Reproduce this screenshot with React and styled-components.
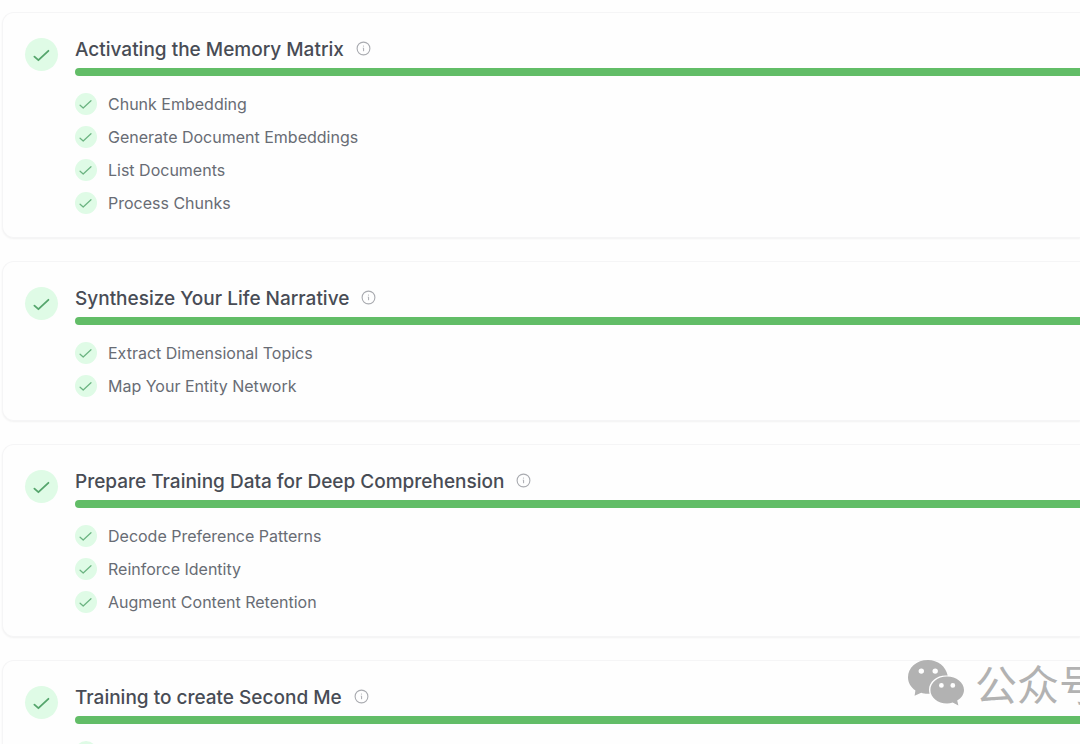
import React from "react";
import styled, { createGlobalStyle } from "styled-components";

const stages = [
  {
    title: "Activating the Memory Matrix",
    steps: [
      "Chunk Embedding",
      "Generate Document Embeddings",
      "List Documents",
      "Process Chunks",
    ],
  },
  {
    title: "Synthesize Your Life Narrative",
    steps: ["Extract Dimensional Topics", "Map Your Entity Network"],
  },
  {
    title: "Prepare Training Data for Deep Comprehension",
    steps: [
      "Decode Preference Patterns",
      "Reinforce Identity",
      "Augment Content Retention",
    ],
  },
  {
    title: "Training to create Second Me",
    steps: [""],
  },
];

const CheckIcon = ({ size, strokeWidth }) => (
  <svg width={size} height={size} viewBox="0 0 18 18" fill="none" aria-hidden="true">
    <path
      d="M1.400 10.600L5.400 14.200L15.400 4.800"
      stroke="currentColor"
      strokeWidth={strokeWidth}
      strokeLinecap="round"
      strokeLinejoin="round"
    />
  </svg>
);

const InfoIcon = () => (
  <svg width="15" height="15" viewBox="0 0 15 15" fill="none" aria-hidden="true">
    <circle cx="7.5" cy="7.5" r="6.4" stroke="currentColor" strokeWidth="1.1" />
    <path d="M6.8 7.1H7.6V10.2" stroke="currentColor" strokeWidth="1" />
    <circle cx="7.5" cy="5" r="0.6" fill="currentColor" />
  </svg>
);

const ChatIcon = () => (
  <svg width="58" height="48" viewBox="0 0 58 48" aria-hidden="true">
    <path
      fill="currentColor"
      fillRule="evenodd"
      d="M21 1C9.600 1 1 8.700 1 18.200C1 23.600 3.800 28.200 8.400 31.400L7.600 36.800L14.200 33.800C16.600 34.500 19 34.900 22.600 34.700A14.500 14.500 0 0 1 22 30.600C22 22.800 29.400 16.400 38.600 16.400H40.700C38.800 7.400 30.800 1 21 1ZM14.300 9.400A2.700 2.700 0 1 1 14.300 14.800A2.700 2.700 0 1 1 14.300 9.400ZM28.200 9.400A2.700 2.700 0 1 1 28.200 14.800A2.700 2.700 0 1 1 28.200 9.400Z"
    />
    <path
      fill="currentColor"
      fillRule="evenodd"
      d="M40 17.400C30.600 17.400 23.400 23.400 23.400 30.900C23.400 38.400 30.600 44.400 40 44.400C42 44.400 44 44.100 45.700 43.500L51.400 46.400L50.200 41.400C54.400 38.900 57 35.200 57 30.900C57 23.400 49.400 17.400 40 17.400ZM34.400 24A2.400 2.400 0 1 1 34.400 28.800A2.400 2.400 0 1 1 34.400 24ZM45.800 24A2.400 2.400 0 1 1 45.800 28.800A2.400 2.400 0 1 1 45.800 24Z"
    />
  </svg>
);

const Stage = ({ title, steps }) => (
  <Card>
    <StageBadge>
      <CheckIcon size={18} strokeWidth={1.8} />
    </StageBadge>
    <StageBody>
      <StageHeader>
        <StageTitle>{title}</StageTitle>
        <InfoButton type="button" aria-label={title}>
          <InfoIcon />
        </InfoButton>
      </StageHeader>
      <Progress role="progressbar" aria-valuenow={100} aria-label={title} />
      <StepList>
        {steps.map((step) => (
          <Step key={step}>
            <StepBadge>
              <CheckIcon size={14} strokeWidth={1.6} />
            </StepBadge>
            {step && <span>{step}</span>}
          </Step>
        ))}
      </StepList>
    </StageBody>
  </Card>
);

const App = () => {
  return (
    <Page>
      <GlobalStyle />
      {stages.map((stage) => (
        <Stage key={stage.title} {...stage} />
      ))}
      <AccountMark>
        <ChatIcon />
        <span>公众号</span>
      </AccountMark>
    </Page>
  );
};

const GlobalStyle = createGlobalStyle`
  * {
    box-sizing: border-box;
  }
  body {
    margin: 0;
    background: #fefefe;
    font-family: Inter, "Liberation Sans", sans-serif;
  }
`;

const Page = styled.main`
  position: relative;
  display: flex;
  flex-direction: column;
  gap: 23px;
  height: 100vh;
  padding: 12px 0 0 2px;
  overflow: hidden;
`;

const Card = styled.section`
  display: flex;
  flex-shrink: 0;
  align-items: flex-start;
  gap: 17px;
  padding: 22px 0 23px 22px;
  border: 1px solid #f5f5f6;
  border-right: none;
  border-radius: 12px 0 0 12px;
  background: #fefefe;
  box-shadow: 0 1px 2px rgba(0, 0, 0, 0.05);
`;

const Badge = styled.span`
  display: flex;
  flex-shrink: 0;
  align-items: center;
  justify-content: center;
  border-radius: 50%;
  background: #dffbe6;
`;

const StageBadge = styled(Badge)`
  width: 33px;
  height: 33px;
  margin-top: 3px;
  color: #55a56c;
`;

const StepBadge = styled(Badge)`
  width: 22px;
  height: 22px;
  color: #6cb482;
`;

const StageBody = styled.div`
  flex: 1;
  min-width: 0;
`;

const StageHeader = styled.div`
  display: flex;
  align-items: flex-start;
  gap: 12px;
`;

const StageTitle = styled.h3`
  margin: 0;
  font-size: 19px;
  line-height: 29px;
  font-weight: 500;
  color: #484c55;
`;

const InfoButton = styled.button`
  display: flex;
  padding: 6px 0;
  border: none;
  background: none;
  color: #a9abb0;
  cursor: pointer;
`;

const Progress = styled.div`
  height: 8px;
  margin-top: 4px;
  border-radius: 4px 0 0 4px;
  background: #62bd67;
`;

const StepList = styled.ul`
  display: flex;
  flex-direction: column;
  gap: 11px;
  margin: 17px 0 0;
  padding: 0;
  list-style: none;
`;

const Step = styled.li`
  display: flex;
  align-items: center;
  gap: 11px;
  font-size: 16px;
  line-height: 22px;
  color: #686c74;
`;

const AccountMark = styled.div`
  position: absolute;
  right: -21px;
  bottom: 33px;
  display: flex;
  align-items: center;
  gap: 10px;
  color: #b2b2b2;
  font-family: "Noto Sans CJK SC", sans-serif;
  font-size: 42px;
  line-height: 56px;
  white-space: nowrap;
`;

export default App;
